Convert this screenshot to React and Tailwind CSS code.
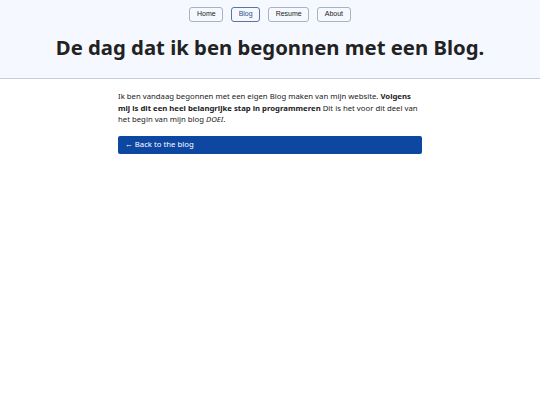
export default function App() {
  return (
    <div className="min-h-[405px] bg-white" style={{ fontFamily: '"Noto Sans", sans-serif' }}>
      <header className="bg-[#f5f8ff] border-b border-[#c8ccd4] pt-[7px] pb-[18px]">
        <nav className="flex justify-center gap-[8px]" style={{ fontFamily: '"Liberation Sans", Arial, sans-serif' }}>
          <a className="h-[15px] px-[6.5px] flex items-center rounded-[3px] border border-[#a9b2c3] text-[7px] text-[#222]">Home</a>
          <a className="h-[15px] px-[6.5px] flex items-center rounded-[3px] border border-[#5c73a3] text-[7px] text-[#2f4f8a]">Blog</a>
          <a className="h-[15px] px-[6.5px] flex items-center rounded-[3px] border border-[#a9b2c3] text-[7px] text-[#222]">Resume</a>
          <a className="h-[15px] px-[6.5px] flex items-center rounded-[3px] border border-[#a9b2c3] text-[7px] text-[#222]">About</a>
        </nav>
        <h1 className="mt-[12px] text-center text-[20.3px] leading-[26px] font-bold text-[#222]">De dag dat ik ben begonnen met een Blog.</h1>
      </header>
      <main className="w-[304px] mx-auto pt-[12px]">
        <p className="text-[7.75px] leading-[11.5px] text-[#222]">
          Ik ben vandaag begonnen met een eigen Blog maken van mijn website. <strong>Volgens mij is dit een heel belangrijke stap in programmeren</strong> Dit is het voor dit deel van het begin van mijn blog <em>DOEI</em>.
        </p>
        <a className="mt-[10px] h-[18px] flex items-center px-[7px] rounded-[2px] bg-[#0d47a1] text-white text-[7.75px]">← Back to the blog</a>
      </main>
    </div>
  );
}
